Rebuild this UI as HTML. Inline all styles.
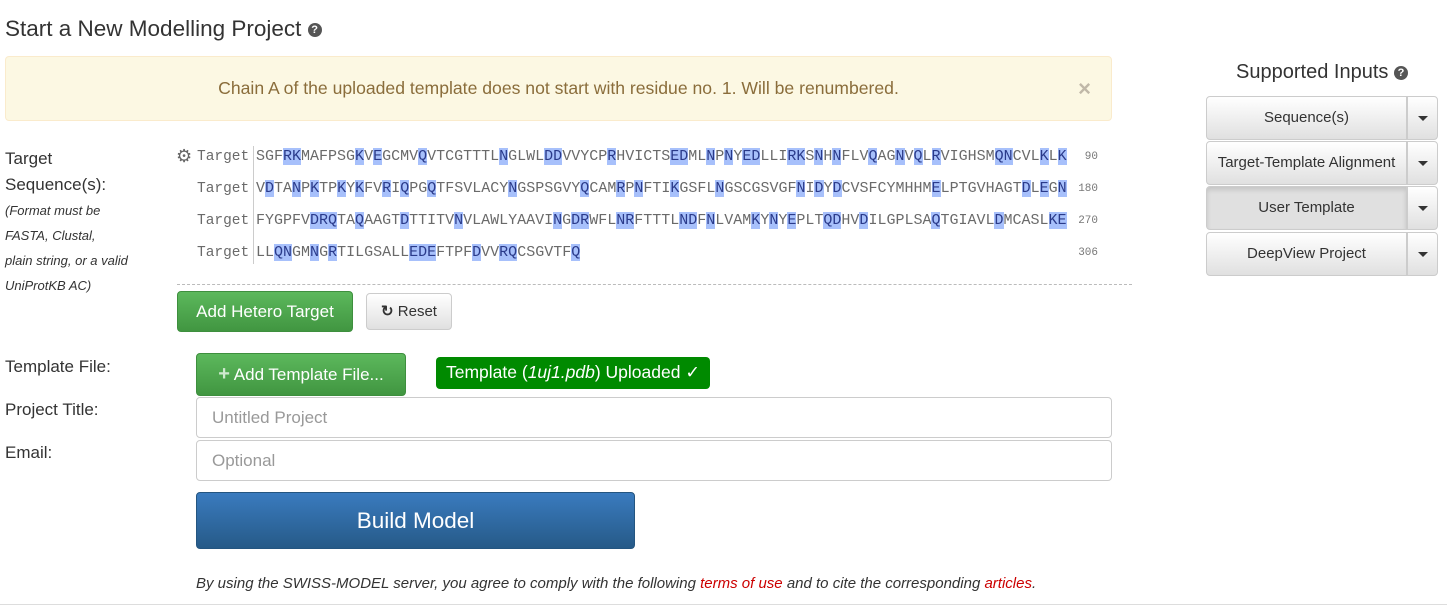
<!DOCTYPE html>
<html><head><meta charset="utf-8"><style>
*{box-sizing:border-box;margin:0;padding:0}
body{width:1447px;height:607px;background:#fff;font-family:"Liberation Sans",sans-serif;color:#333;position:relative;overflow:hidden}
.a{position:absolute}
.q{display:inline-block;width:14px;height:14px;border-radius:50%;background:#555;color:#fff;font-size:11px;font-weight:bold;text-align:center;line-height:14px;vertical-align:middle}
.seq{position:absolute;left:256px;font-family:"Liberation Mono",monospace;font-size:15px;color:#6a6a6a;white-space:pre;line-height:18px}
.tg{position:absolute;left:197px;font-family:"Liberation Mono",monospace;font-size:14.5px;color:#6a6a6a;line-height:18px}
.seq b{font-weight:normal;background:#a7c0fb;color:#2a3a8a}
.num{position:absolute;left:1070px;width:28px;text-align:right;font-family:"Liberation Mono",monospace;font-size:11px;color:#777}
.btn{position:absolute;border-radius:4px;text-align:center}
.green{background:linear-gradient(#5cb85c,#419641);border:1px solid #3e8f3e;color:#fff;font-size:17px}
.inp{position:absolute;left:196px;width:916px;height:41px;border:1px solid #ccc;border-radius:4px;font-size:17px;color:#999;padding:10px 15px}
.sb{position:absolute;left:1206px;width:201px;height:44px;background:linear-gradient(#fff,#e0e0e0);border:1px solid #ccc;border-radius:4px 0 0 4px;font-size:15px;text-align:center;line-height:42px;color:#333}
.sc{position:absolute;left:1407px;width:31px;height:44px;background:linear-gradient(#fff,#e0e0e0);border:1px solid #ccc;border-radius:0 4px 4px 0}
.sc:after{content:"";position:absolute;left:10px;top:19px;border-left:5px solid transparent;border-right:5px solid transparent;border-top:5px solid #333}
.lbl{position:absolute;left:5px;font-size:17px;color:#333}
</style></head><body>
<div class="a" style="left:5px;top:16px;font-size:22.5px;color:#333">Start a New Modelling Project <span class="q">?</span></div>
<div class="a" style="left:5px;top:56px;width:1107px;height:65px;background:#fcf8e3;border:1px solid #faebcc;border-radius:4px;color:#8a6d3b;font-size:17.6px;text-align:center;line-height:63px">Chain A of the uploaded template does not start with residue no. 1. Will be renumbered.<span style="position:absolute;right:20px;color:#c0b8a8;font-size:22px;font-weight:bold">×</span></div>

<div class="a" style="left:1206px;top:61px;width:232px;text-align:center;font-size:20px;color:#333">Supported Inputs <span class="q">?</span></div>
<div class="sb" style="top:96px">Sequence(s)</div><div class="sc" style="top:96px"></div>
<div class="sb" style="top:141px">Target-Template Alignment</div><div class="sc" style="top:141px"></div>
<div class="sb" style="top:186px;background:#e0e0e0;box-shadow:inset 0 3px 5px rgba(0,0,0,.12)">User Template</div><div class="sc" style="top:186px"></div>
<div class="sb" style="top:232px">DeepView Project</div><div class="sc" style="top:232px"></div>

<div class="lbl" style="top:146px;line-height:26px">Target<br>Sequence(s):</div>
<div class="a" style="left:5px;top:198px;font-size:13px;font-style:italic;line-height:25px;color:#333">(Format must be<br>FASTA, Clustal,<br>plain string, or a valid<br>UniProtKB AC)</div>

<div class="a" style="left:176px;top:146px;font-size:18px;color:#666">⚙</div>
<div class="a" style="left:253px;top:146px;width:1px;height:118px;background:#ccc"></div>
<div class="tg" style="top:148px">Target</div><div class="tg" style="top:180px">Target</div><div class="tg" style="top:212px">Target</div><div class="tg" style="top:244px">Target</div>
<div class="seq" style="top:148px">SGF<b>RK</b>MAFPSG<b>K</b>V<b>E</b>GCMV<b>Q</b>VTCGTTTL<b>N</b>GLWL<b>DD</b>VVYCP<b>R</b>HVICTS<b>ED</b>ML<b>N</b>P<b>N</b>Y<b>ED</b>LLI<b>RK</b>S<b>N</b>H<b>N</b>FLV<b>Q</b>AG<b>N</b>V<b>Q</b>L<b>R</b>VIGHSM<b>QN</b>CVL<b>K</b>L<b>K</b></div>
<div class="seq" style="top:180px">V<b>D</b>TA<b>N</b>P<b>K</b>TP<b>K</b>Y<b>K</b>FV<b>R</b>I<b>Q</b>PG<b>Q</b>TFSVLACY<b>N</b>GSPSGVY<b>Q</b>CAM<b>R</b>P<b>N</b>FTI<b>K</b>GSFL<b>N</b>GSCGSVGF<b>N</b>I<b>D</b>Y<b>D</b>CVSFCYMHHM<b>E</b>LPTGVHAGT<b>D</b>L<b>E</b>G<b>N</b></div>
<div class="seq" style="top:212px">FYGPFV<b>DRQ</b>TA<b>Q</b>AAGT<b>D</b>TTITV<b>N</b>VLAWLYAAVI<b>N</b>G<b>DR</b>WFL<b>NR</b>FTTTL<b>ND</b>F<b>N</b>LVAM<b>K</b>Y<b>N</b>Y<b>E</b>PLT<b>QD</b>HV<b>D</b>ILGPLSA<b>Q</b>TGIAVL<b>D</b>MCASL<b>KE</b></div>
<div class="seq" style="top:244px">LL<b>QN</b>GM<b>N</b>G<b>R</b>TILGSALL<b>EDE</b>FTPF<b>D</b>VV<b>RQ</b>CSGVTF<b>Q</b></div>
<div class="num" style="top:151px">90</div>
<div class="num" style="top:183px">180</div>
<div class="num" style="top:215px">270</div>
<div class="num" style="top:247px">306</div>
<div class="a" style="left:177px;top:284px;width:955px;border-top:1px dashed #bbb"></div>

<div class="btn green" style="left:177px;top:291px;width:176px;height:41px;line-height:39px">Add Hetero Target</div>
<div class="btn" style="left:366px;top:293px;width:86px;height:37px;line-height:35px;border:1px solid #ccc;background:linear-gradient(#fff,#e0e0e0);font-size:15px;color:#333"><b>↻</b> Reset</div>

<div class="lbl" style="top:357px">Template File:</div>
<div class="lbl" style="top:400px">Project Title:</div>
<div class="lbl" style="top:443px">Email:</div>
<div class="btn green" style="left:196px;top:353px;width:210px;height:43px;line-height:41px"><span style="color:#cfe9cf;font-weight:bold;font-size:20px">+</span> Add Template File...</div>
<div class="btn" style="left:436px;top:357px;width:274px;height:32px;line-height:31px;background:#008a00;color:#fff;font-size:17.5px">Template (<i>1uj1.pdb</i>) Uploaded ✓</div>
<div class="inp" style="top:397px">Untitled Project</div>
<div class="inp" style="top:440px">Optional</div>
<div class="btn" style="left:196px;top:492px;width:439px;height:57px;line-height:55px;background:linear-gradient(#3a7bbf,#265a88);border:1px solid #245580;color:#fff;font-size:22.5px">Build Model</div>
<div class="a" style="left:196px;top:575px;font-size:15px;font-style:italic;color:#333">By using the SWISS-MODEL server, you agree to comply with the following <span style="color:#c00">terms of use</span> and to cite the corresponding <span style="color:#c00">articles</span>.</div>
<div class="a" style="left:0;top:604px;width:1447px;border-top:1px solid #ddd"></div>
</body></html>
